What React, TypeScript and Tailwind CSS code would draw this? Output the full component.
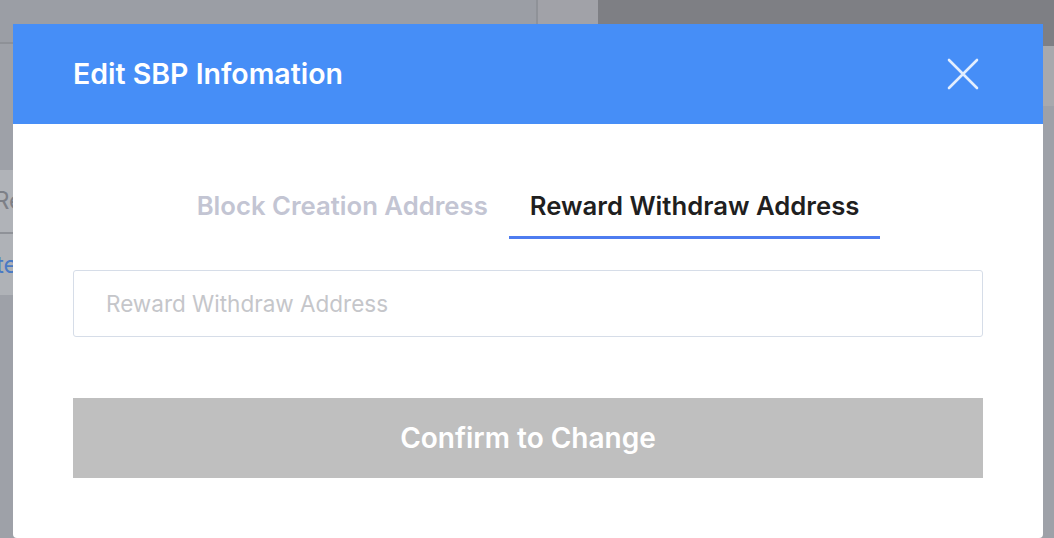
import { useState } from "react";

const tabs = ["Block Creation Address", "Reward Withdraw Address"];

function CloseIcon() {
  return (
    <svg width="32" height="32" viewBox="0 0 32 32" fill="none" stroke="white" strokeOpacity="0.85" strokeWidth="2.6" strokeLinecap="round">
      <path d="M2 2L30 30M30 2L2 30" />
    </svg>
  );
}

export default function App() {
  const [active, setActive] = useState(1);
  const [address, setAddress] = useState("");

  return (
    <div className="relative h-[538px] w-[1054px] overflow-hidden bg-[#9ea1a8] font-['Inter',sans-serif]">
      {/* page behind the mask */}
      <div className="flex h-[46px]">
        <div className="h-[44px] w-[536px] border-b-2 border-[#8e9197] bg-[#9b9ea5]" />
        <div className="h-[44px] w-[2px] bg-[#8f9298]" />
        <div className="h-[44px] w-[60px] bg-[#a1a2a8]" />
        <div className="flex-1 bg-[#7e7f84]" />
      </div>
      <div className="flex">
        <div className="w-[200px] pt-[124px]">
          <div className="flex h-[62px] items-center bg-[#b0b3b8] text-[24px] text-[#7d8087]">
            <span className="-ml-[6px]">Reward</span>
          </div>
          <div className="h-[2px] bg-[#8f9298]" />
          <div className="flex h-[61px] items-center bg-[#afb2b7] text-[24px] text-[#4a7ac4]">
            <span className="-ml-[4px]">te</span>
          </div>
        </div>
        <div className="flex-1" />
        <div className="w-[11px]">
          <div className="h-[60px] bg-[#a8a9ad]" />
        </div>
      </div>

      {/* modal */}
      <div className="absolute left-[13px] top-[24px] flex h-[514px] w-[1030px] flex-col overflow-hidden rounded-b-[4px] bg-white">
        <div className="flex h-[100px] shrink-0 items-center justify-between bg-[#468ef7] pl-[60px] pr-[64px]">
          <h2 className="text-[28.5px] font-semibold text-white">Edit SBP Infomation</h2>
          <button className="flex h-[32px] w-[32px] items-center justify-center">
            <CloseIcon />
          </button>
        </div>

        <div className="flex flex-col px-[60px] pt-[67px]">
          <div className="flex justify-center">
            {tabs.map((tab, i) => (
              <button
                key={tab}
                onClick={() => setActive(i)}
                className={
                  i === active
                    ? "border-b-[3px] border-[#4e7cf0] px-[21px] pb-[15px] text-[25.7px] leading-[30px] font-semibold text-[#1f1f1f]"
                    : "border-b-[3px] border-transparent px-[21px] pb-[15px] text-[25.7px] leading-[30px] font-semibold text-[#c3c5d3]"
                }
              >
                {tab}
              </button>
            ))}
          </div>

          <input
            value={address}
            onChange={(e) => setAddress(e.target.value)}
            placeholder={tabs[active]}
            className="mt-[31px] h-[67px] w-full rounded-[3px] border border-[#d6dde8] px-[32px] text-[22.5px] text-[#333] outline-none placeholder:text-[#c5c6ca]"
          />

          <button className="mt-[61px] h-[80px] w-full bg-[#bfbfbf] text-[28px] font-semibold text-white">
            Confirm to Change
          </button>
        </div>
      </div>
    </div>
  );
}
